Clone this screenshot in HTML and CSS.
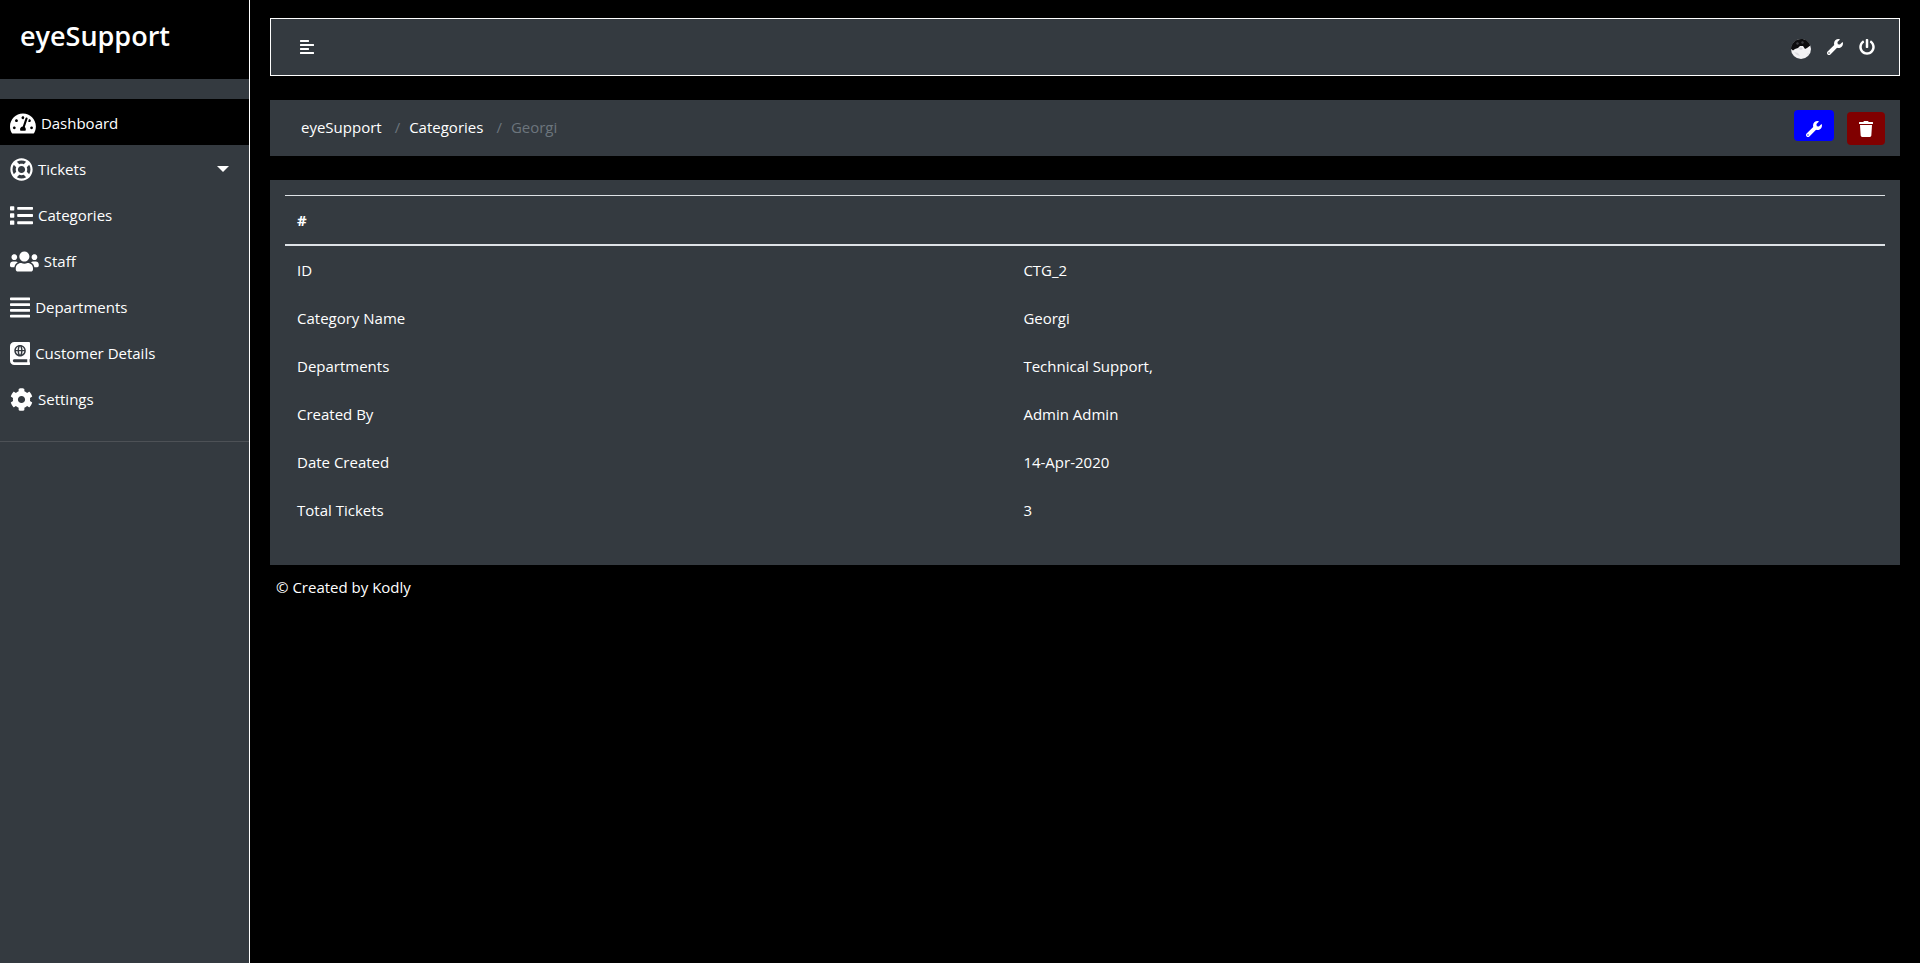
FILE: index.html
```html
<!DOCTYPE html>
<html lang="en">
<head>
    <meta charset="UTF-8">
    <meta name="viewport" content="width=device-width, initial-scale=1.0">
    <title>eyeSupport</title>
    <link rel="stylesheet" href="styles.css">
</head>
<body>
    <div class="wrapper">

        <nav class="sidebar">
            <div class="sidebar-header">
                <h3>eyeSupport</h3>
            </div>
            <ul class="menu">
                <li class="active">
                    <a href="#">
                        <svg class="icon" viewBox="0 0 576 512"><path d="M288 32C128.94 32 0 160.94 0 320c0 52.8 14.25 102.26 39.06 144.8 5.61 9.62 16.3 15.2 27.44 15.2h443c11.14 0 21.83-5.58 27.44-15.2C561.75 422.26 576 372.8 576 320c0-159.06-128.94-288-288-288zm0 64c14.71 0 26.58 10.13 30.32 23.65-1.11 2.26-2.64 4.23-3.45 6.67l-9.22 27.67c-5.13 3.49-10.97 6.01-17.64 6.01-17.67 0-32-14.33-32-32S270.33 96 288 96zM96 384c-17.67 0-32-14.33-32-32s14.33-32 32-32 32 14.33 32 32-14.33 32-32 32zm48-160c-17.67 0-32-14.33-32-32s14.33-32 32-32 32 14.33 32 32-14.33 32-32 32zm246.77-72.41l-61.33 184C343.13 347.33 352 364.54 352 384c0 11.72-3.38 22.55-8.88 32H232.88c-5.5-9.45-8.88-20.28-8.88-32 0-33.94 26.5-61.43 59.9-63.59l61.34-184.01c4.17-12.56 17.73-19.45 30.36-15.17 12.57 4.19 19.35 17.79 15.17 30.36zm14.66 57.2l15.52-46.55c3.47-1.29 7.13-2.23 11.05-2.23 17.67 0 32 14.33 32 32s-14.33 32-32 32c-11.38-.01-20.89-6.28-26.57-15.22zM480 384c-17.67 0-32-14.33-32-32s14.33-32 32-32 32 14.33 32 32-14.33 32-32 32z"/></svg>
                        <span>Dashboard</span>
                    </a>
                </li>
                <li>
                    <a href="#" class="dropdown">
                        <svg class="icon" viewBox="0 0 512 512"><path d="M256 504c136.967 0 248-111.033 248-248S392.967 8 256 8 8 119.033 8 256s111.033 248 248 248zm-103.398-76.72l53.411-53.411c31.806 13.506 68.128 13.522 99.974 0l53.411 53.411c-63.217 38.319-143.579 38.319-206.796 0zM336 256c0 44.112-35.888 80-80 80s-80-35.888-80-80 35.888-80 80-80 80 35.888 80 80zm91.28 103.398l-53.411-53.411c13.505-31.806 13.522-68.128 0-99.974l53.411-53.411c38.319 63.217 38.319 143.579 0 206.796zM359.397 84.72l-53.411 53.411c-31.806-13.505-68.128-13.522-99.973 0L152.602 84.72c63.217-38.319 143.579-38.319 206.795 0zM84.72 152.602l53.411 53.411c-13.506 31.806-13.522 68.128 0 99.974L84.72 359.398c-38.319-63.217-38.319-143.579 0-206.796z"/></svg>
                        <span>Tickets</span>
                    </a>
                </li>
                <li>
                    <a href="#">
                        <svg class="icon" viewBox="0 0 512 512"><path d="M80 368H16a16 16 0 0 0-16 16v64a16 16 0 0 0 16 16h64a16 16 0 0 0 16-16v-64a16 16 0 0 0-16-16zm0-320H16A16 16 0 0 0 0 64v64a16 16 0 0 0 16 16h64a16 16 0 0 0 16-16V64a16 16 0 0 0-16-16zm0 160H16a16 16 0 0 0-16 16v64a16 16 0 0 0 16 16h64a16 16 0 0 0 16-16v-64a16 16 0 0 0-16-16zm416 176H176a16 16 0 0 0-16 16v32a16 16 0 0 0 16 16h320a16 16 0 0 0 16-16v-32a16 16 0 0 0-16-16zm0-320H176a16 16 0 0 0-16 16v32a16 16 0 0 0 16 16h320a16 16 0 0 0 16-16V80a16 16 0 0 0-16-16zm0 160H176a16 16 0 0 0-16 16v32a16 16 0 0 0 16 16h320a16 16 0 0 0 16-16v-32a16 16 0 0 0-16-16z"/></svg>
                        <span>Categories</span>
                    </a>
                </li>
                <li>
                    <a href="#">
                        <svg class="icon" viewBox="0 0 640 512"><path d="M96 224c35.3 0 64-28.7 64-64s-28.7-64-64-64-64 28.7-64 64 28.7 64 64 64zm448 0c35.3 0 64-28.7 64-64s-28.7-64-64-64-64 28.7-64 64 28.7 64 64 64zm32 32h-64c-17.6 0-33.5 7.1-45.1 18.6 40.3 22.1 68.9 62 75.1 109.4h66c17.7 0 32-14.3 32-32v-32c0-35.3-28.7-64-64-64zm-256 0c61.9 0 112-50.1 112-112S381.9 32 320 32 208 82.1 208 144s50.1 112 112 112zm76.8 32h-8.3c-20.8 10-43.9 16-68.5 16s-47.6-6-68.5-16h-8.3C179.6 288 128 339.6 128 403.2V432c0 26.5 21.5 48 48 48h288c26.5 0 48-21.5 48-48v-28.8c0-63.6-51.6-115.2-115.2-115.2zm-223.7-13.4C161.5 263.1 145.6 256 128 256H64c-35.3 0-64 28.7-64 64v32c0 17.7 14.3 32 32 32h65.9c6.3-47.4 34.9-87.3 75.2-109.4z"/></svg>
                        <span>Staff</span>
                    </a>
                </li>
                <li>
                    <a href="#">
                        <svg class="icon" viewBox="0 0 448 512"><path d="M432 416H16a16 16 0 0 0-16 16v32a16 16 0 0 0 16 16h416a16 16 0 0 0 16-16v-32a16 16 0 0 0-16-16zm0-128H16a16 16 0 0 0-16 16v32a16 16 0 0 0 16 16h416a16 16 0 0 0 16-16v-32a16 16 0 0 0-16-16zm0-128H16a16 16 0 0 0-16 16v32a16 16 0 0 0 16 16h416a16 16 0 0 0 16-16v-32a16 16 0 0 0-16-16zm0-128H16A16 16 0 0 0 0 48v32a16 16 0 0 0 16 16h416a16 16 0 0 0 16-16V48a16 16 0 0 0-16-16z"/></svg>
                        <span>Departments</span>
                    </a>
                </li>
                <li>
                    <a href="#">
                        <svg class="icon" viewBox="0 0 448 512"><path d="M318.38 208h-39.09c-1.49 27.03-6.54 51.35-14.21 70.41 27.71-13.24 48.02-39.19 53.3-70.41zm0-32c-5.29-31.22-25.59-57.17-53.3-70.41 7.68 19.06 12.72 43.38 14.21 70.41h39.09zM224 97.31c-7.69 7.45-20.77 34.42-23.43 78.69h46.87c-2.67-44.26-15.75-71.24-23.44-78.69zm-41.08 8.28c-27.71 13.24-48.02 39.19-53.3 70.41h39.09c1.49-27.03 6.53-51.35 14.21-70.41zm0 172.82c-7.68-19.06-12.72-43.38-14.21-70.41h-39.09c5.28 31.22 25.59 57.17 53.3 70.41zM247.43 208h-46.87c2.66 44.26 15.74 71.24 23.43 78.69 7.7-7.45 20.78-34.43 23.44-78.69zM448 358.4V25.6c0-16-9.6-25.6-25.6-25.6H96C41.6 0 0 41.6 0 96v320c0 54.4 41.6 96 96 96h326.4c12.8 0 25.6-9.6 25.6-25.6v-16c0-6.4-3.2-12.8-9.6-19.2-3.2-16-3.2-60.8 0-73.6 6.4-3.2 9.6-9.6 9.6-19.2zM224 64c70.69 0 128 57.31 128 128s-57.31 128-128 128S96 262.69 96 192 153.31 64 224 64zm160 384H96c-19.2 0-32-12.8-32-32s16-32 32-32h288v64z"/></svg>
                        <span>Customer Details</span>
                    </a>
                </li>
                <li>
                    <a href="#">
                        <svg class="icon" viewBox="0 0 512 512"><path d="M487.4 315.7l-42.6-24.6c4.3-23.2 4.3-47 0-70.2l42.6-24.6c4.9-2.8 7.1-8.6 5.5-14-11.1-35.6-30-67.8-54.7-94.6-3.8-4.1-10-5.1-14.8-2.3L380.8 110c-17.9-15.4-38.5-27.3-60.8-35.1V25.8c0-5.6-3.9-10.5-9.4-11.7-36.7-8.2-74.3-7.8-109.2 0-5.5 1.2-9.4 6.1-9.4 11.7V75c-22.2 7.9-42.8 19.8-60.8 35.1L88.7 85.5c-4.9-2.8-11-1.9-14.8 2.3-24.7 26.7-43.6 58.9-54.7 94.6-1.7 5.4.6 11.2 5.5 14L67.3 221c-4.3 23.2-4.3 47 0 70.2l-42.6 24.6c-4.9 2.8-7.1 8.6-5.5 14 11.1 35.6 30 67.8 54.7 94.6 3.8 4.1 10 5.1 14.8 2.3l42.6-24.6c17.9 15.4 38.5 27.3 60.8 35.1v49.2c0 5.6 3.9 10.5 9.4 11.7 36.7 8.2 74.3 7.8 109.2 0 5.5-1.2 9.4-6.1 9.4-11.7v-49.2c22.2-7.9 42.8-19.8 60.8-35.1l42.6 24.6c4.9 2.8 11 1.9 14.8-2.3 24.7-26.7 43.6-58.9 54.7-94.6 1.5-5.5-.7-11.3-5.6-14.1zM256 336c-44.1 0-80-35.9-80-80s35.9-80 80-80 80 35.9 80 80-35.9 80-80 80z"/></svg>
                        <span>Settings</span>
                    </a>
                </li>
            </ul>
        </nav>

        <main class="content">
            <div class="navbar">
                <button type="button" class="toggle" aria-label="Toggle sidebar">
                    <svg class="icon-sm" viewBox="0 0 448 512"><path d="M12.83 352h262.34A12.82 12.82 0 0 0 288 339.17v-38.34A12.82 12.82 0 0 0 275.17 288H12.83A12.82 12.82 0 0 0 0 300.83v38.34A12.82 12.82 0 0 0 12.83 352zm0-256h262.34A12.82 12.82 0 0 0 288 83.17V44.83A12.82 12.82 0 0 0 275.17 32H12.83A12.82 12.82 0 0 0 0 44.83v38.34A12.82 12.82 0 0 0 12.83 96zM432 160H16a16 16 0 0 0-16 16v32a16 16 0 0 0 16 16h416a16 16 0 0 0 16-16v-32a16 16 0 0 0-16-16zm0 256H16a16 16 0 0 0-16 16v32a16 16 0 0 0 16 16h416a16 16 0 0 0 16-16v-32a16 16 0 0 0-16-16z"/></svg>
                </button>
                <div class="nav-links">
                    <a href="#" class="avatar" aria-label="Profile">
                        <svg viewBox="0 0 20 20">
                            <circle cx="10" cy="10" r="10" fill="#f2f2f4"/>
                            <path d="M0 10C0 4 5 0 10 0c4.500 0 8 2.500 9.300 6.500L16 9l-2 1-2-3-3 0-2 2-3 1-2 1.500z" fill="#0c0c0e"/>
                            <path d="M5 4l2-1 1 2-2 1zM11 2l2 1-1 2-2-1z" fill="#3b3b40"/>
                            <path d="M7 10l3-2 2 2-2 1z" fill="#d5d5da"/>
                            <path d="M3 13l4 1 2 3-3-1zM16 15l2-1-1 2z" fill="#dcdce0"/>
                        </svg>
                    </a>
                    <a href="#" aria-label="Settings">
                        <svg class="icon-sm" viewBox="0 0 512 512"><path d="M507.730 109.100c-2.240-9.030-13.540-12.090-20.120-5.510l-74.360 74.360-67.880-11.310-11.310-67.880 74.360-74.360c6.620-6.620 3.430-17.900-5.660-20.160-47.380-11.740-99.550.91-136.580 37.930-39.640 39.640-50.550 97.100-34.050 147.200L18.740 402.760c-24.990 24.990-24.990 65.510 0 90.500 24.990 24.990 65.510 24.990 90.500 0l213.210-213.210c50.120 16.710 107.470 5.680 147.370-34.220 37.070-37.070 49.700-89.320 37.910-136.730zM64 472c-13.250 0-24-10.750-24-24 0-13.260 10.750-24 24-24s24 10.740 24 24c0 13.250-10.750 24-24 24z"/></svg>
                    </a>
                    <a href="#" aria-label="Log out">
                        <svg class="icon-sm" viewBox="0 0 512 512"><path d="M400 54.1c63 45 104 118.6 104 201.9 0 136.8-110.8 247.7-247.5 248C120 504.3 8.200 393 8 256.400 7.900 173.100 48.900 99.300 111.800 54.200c11.700-8.300 28-4.800 35 7.700L162.600 90c5.900 10.500 3.100 23.800-6.600 31-41.500 30.800-68 79.600-68 134.900-.1 92.300 74.500 168.100 168 168.100 91.600 0 168.600-74.200 168-169.100-.3-51.800-24.700-101.800-68.100-134-9.700-7.200-12.400-20.500-6.500-30.900l15.800-28.100c7-12.400 23.200-16.100 34.800-7.800zM296 264V24c0-13.300-10.700-24-24-24h-32c-13.300 0-24 10.700-24 24v240c0 13.300 10.700 24 24 24h32c13.300 0 24-10.700 24-24z"/></svg>
                    </a>
                </div>
            </div>

            <div class="page-bar">
                <ol class="breadcrumb">
                    <li><a href="#">eyeSupport</a></li>
                    <li><a href="#">Categories</a></li>
                    <li class="current">Georgi</li>
                </ol>
                <div class="actions">
                    <a href="#" class="btn btn-edit" aria-label="Edit category">
                        <svg class="icon-sm" viewBox="0 0 512 512"><path d="M507.730 109.100c-2.240-9.030-13.540-12.090-20.120-5.510l-74.360 74.360-67.880-11.310-11.310-67.880 74.360-74.360c6.620-6.620 3.430-17.900-5.660-20.160-47.380-11.740-99.550.91-136.580 37.930-39.640 39.640-50.550 97.100-34.050 147.200L18.740 402.760c-24.990 24.990-24.990 65.510 0 90.500 24.990 24.990 65.510 24.990 90.500 0l213.210-213.210c50.120 16.710 107.470 5.680 147.370-34.220 37.070-37.070 49.700-89.320 37.910-136.730zM64 472c-13.250 0-24-10.750-24-24 0-13.260 10.750-24 24-24s24 10.740 24 24c0 13.250-10.750 24-24 24z"/></svg>
                    </a>
                    <button type="button" class="btn btn-delete" aria-label="Delete category">
                        <svg class="icon-sm" viewBox="0 0 448 512"><path d="M432 32H312l-9.400-18.700A24 24 0 0 0 281.100 0H166.800a23.720 23.720 0 0 0-21.400 13.300L136 32H16A16 16 0 0 0 0 48v32a16 16 0 0 0 16 16h416a16 16 0 0 0 16-16V48a16 16 0 0 0-16-16zM53.200 467a48 48 0 0 0 47.900 45h245.800a48 48 0 0 0 47.900-45L416 128H32z"/></svg>
                    </button>
                </div>
            </div>

            <div class="card">
                <table class="table">
                    <thead>
                        <tr><th>#</th><th></th></tr>
                    </thead>
                    <tbody>
                        <tr><td>ID</td><td>CTG_2</td></tr>
                        <tr><td>Category Name</td><td>Georgi</td></tr>
                        <tr><td>Departments</td><td>Technical Support,</td></tr>
                        <tr><td>Created By</td><td>Admin Admin</td></tr>
                        <tr><td>Date Created</td><td>14-Apr-2020</td></tr>
                        <tr><td>Total Tickets</td><td>3</td></tr>
                    </tbody>
                </table>
            </div>

            <footer>© Created by Kodly</footer>
        </main>

    </div>
</body>
</html>
```

FILE: styles.css
```css
* {
    margin: 0;
    padding: 0;
    box-sizing: border-box;
}

body {
    background: #000;
    color: #fff;
    font-family: "Segoe UI", "Open Sans", "Noto Sans", sans-serif;
    font-size: 15px;
    line-height: 24px;
}

a {
    color: #fff;
    text-decoration: none;
}

ul,
ol {
    list-style: none;
}

svg {
    display: block;
    fill: currentColor;
}

.wrapper {
    display: flex;
    min-height: 100vh;
}

/* sidebar */
.sidebar {
    flex: 0 0 250px;
    background: #343a40;
    border-right: 1px solid #fff;
}

.sidebar-header {
    padding: 19px 20px 26px;
    background: #000;
}

.sidebar-header h3 {
    font-size: 27px;
    font-weight: 600;
    line-height: 34px;
}

.menu {
    padding: 20px 0;
    border-bottom: 1px solid #4d5156;
}

.menu a {
    display: flex;
    align-items: center;
    gap: 5px;
    padding: 12px 20px 10px 10px;
}

.menu .active {
    background: #000;
}

.icon {
    height: 23px;
}

.dropdown::after {
    content: "";
    margin-left: auto;
    border-top: 6px solid #fff;
    border-left: 6px solid transparent;
    border-right: 6px solid transparent;
}

/* content */
.content {
    flex: 1;
    padding: 18px 20px 20px;
}

.navbar {
    display: flex;
    align-items: center;
    justify-content: space-between;
    height: 58px;
    padding: 0 24px 0 17px;
    margin-bottom: 24px;
    background: #343a40;
    border: 1px solid #fff;
}

.toggle {
    padding: 6px 12px;
    background: none;
    border: 0;
    color: #fff;
}

.icon-sm {
    height: 16px;
}

.nav-links {
    display: flex;
    align-items: flex-start;
    gap: 16px;
    padding-top: 4px;
}

.avatar svg {
    width: 20px;
    height: 20px;
}

.page-bar {
    display: flex;
    justify-content: space-between;
    padding: 10px 15px;
    margin-bottom: 24px;
    background: #343a40;
}

.breadcrumb {
    display: flex;
    padding: 5px 16px 7px;
}

.breadcrumb li + li::before {
    content: "/";
    padding: 0 9px 0 13px;
    color: #6c757d;
}

.breadcrumb .current {
    color: #6c757d;
}

.actions {
    display: flex;
    align-items: flex-start;
    gap: 13px;
}

.btn {
    padding: 9px 12px;
    border: 0;
    border-radius: 4px;
    color: #fff;
}

.btn-edit {
    padding-top: 11px;
    padding-bottom: 4px;
    background: #00f;
}

.btn-delete {
    margin-top: 2px;
    padding-bottom: 8px;
    background: #800000;
}

.card {
    padding: 15px;
    background: #343a40;
}

.table {
    width: 100%;
    margin-bottom: 16px;
    border-collapse: collapse;
    border-top: 1px solid #dee2e6;
    text-align: left;
}

.table th,
.table td {
    padding: 12px;
}

.table th:first-child {
    width: 45.4%;
}

.table thead {
    border-bottom: 2px solid #dee2e6;
}

footer {
    padding: 10px 6px;
}
```
